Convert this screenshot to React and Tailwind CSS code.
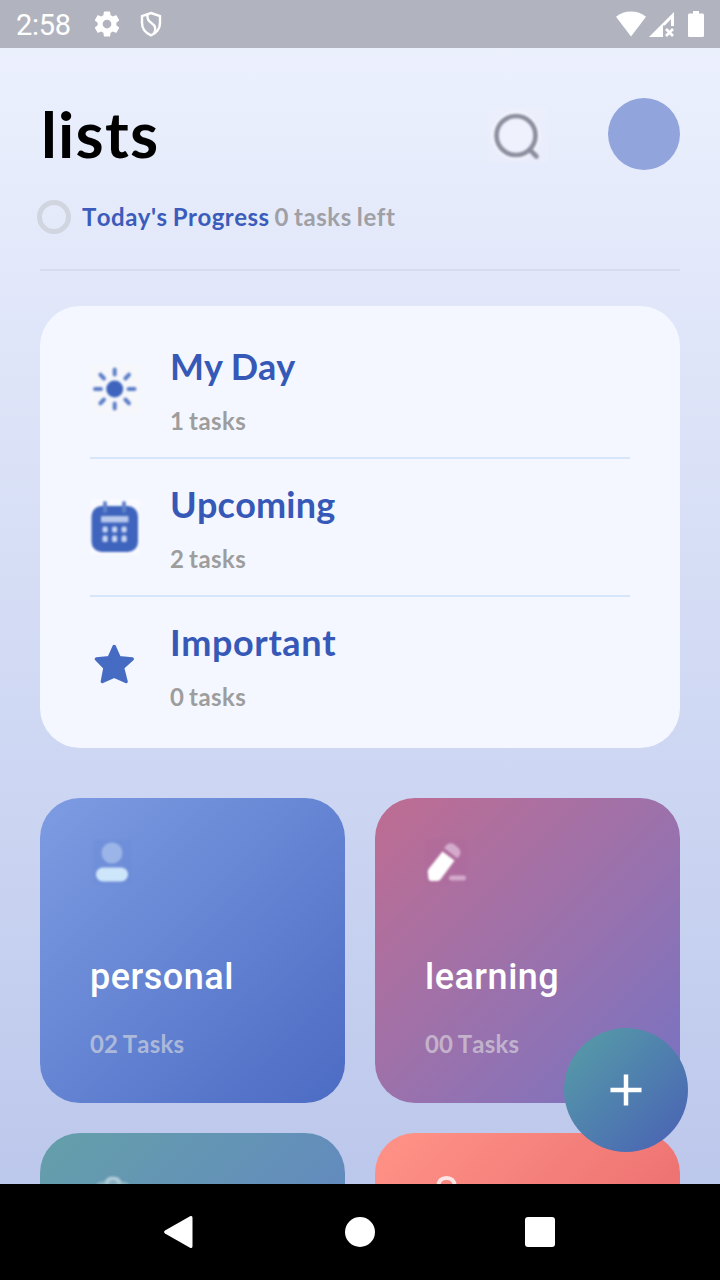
import React from "react";

function StatusBar() {
  return (
    <header className="flex h-12 shrink-0 items-center bg-[#b1b4be] pr-4 pl-4 text-white">
      <span className="w-[55px] pt-[2px] font-['Roboto',sans-serif] text-[29px] leading-[46px] tracking-[-0.3px] whitespace-nowrap">2:58</span>
      <svg className="ml-[21px] size-[30px]" viewBox="0 0 24 24" fill="currentColor">
        <path d="M19.43 12.98c.04-.32.07-.64.07-.98s-.03-.66-.07-.98l2.11-1.65c.19-.15.24-.42.12-.64l-2-3.46c-.12-.22-.39-.3-.61-.22l-2.49 1c-.52-.4-1.08-.73-1.69-.98l-.38-2.65A.488.488 0 0 0 14 2h-4c-.25 0-.46.18-.49.42l-.38 2.65c-.61.25-1.17.59-1.69.98l-2.49-1c-.23-.09-.49 0-.61.22l-2 3.46c-.13.22-.07.49.12.64l2.11 1.65c-.04.32-.07.65-.07.98s.03.66.07.98l-2.11 1.65c-.19.15-.24.42-.12.64l2 3.46c.12.22.39.3.61.22l2.49-1c.52.4 1.08.73 1.69.98l.38 2.65c.03.24.24.42.49.42h4c.25 0 .46-.18.49-.42l.38-2.65c.61-.25 1.17-.59 1.69-.98l2.49 1c.23.09.49 0 .61-.22l2-3.46c.12-.22.07-.49-.12-.64l-2.11-1.65zM12 15.5c-1.93 0-3.5-1.57-3.5-3.5s1.57-3.5 3.5-3.5 3.5 1.57 3.5 3.5-1.57 3.5-3.5 3.5z" />
      </svg>
      <svg className="ml-[18px] h-[26px] w-[22px]" viewBox="0 0 22 26" fill="none" stroke="currentColor" strokeWidth="2.4">
        <path d="M11 2 20 5.1V12c0 5.6-3.6 9.9-9 12.3C5.600 21.900 2 17.600 2 12V5.100Z" />
        <path d="M7.600 3.500C6.500 8 9 10.500 12 12.500s4.500 5 2.200 9.700" />
      </svg>
      <svg className="ml-auto h-[26px] w-[30px]" viewBox="0 0 30 26" fill="currentColor">
        <path d="M0 5.800C8-1.300 22-1.300 30 5.800L15 25.500Z" />
      </svg>
      <svg className="ml-[3px] h-[25px] w-[25px]" viewBox="0 0 25 25" fill="currentColor">
        <path fillRule="evenodd" d="M25 0v14h-3V7.200L15.800 13.500H14V25H0Z" />
        <path d="m17 17 7 7m0-7-7 7" stroke="currentColor" strokeWidth="2.800" />
      </svg>
      <svg className="ml-[14px] h-[26px] w-4" viewBox="0 0 16 26" fill="currentColor">
        <path d="M5 0h6v2.600h3.400c.9 0 1.600.7 1.600 1.600v20.200c0 .9-.7 1.600-1.600 1.600H1.600C.7 26 0 25.300 0 24.400V4.200c0-.9.7-1.600 1.600-1.600H5Z" />
      </svg>
    </header>
  );
}

function SearchIcon() {
  return (
    <svg className="h-14 w-15 blur-[0.8px]" viewBox="0 0 60 56" fill="none">
      <rect y="1" width="60" height="55" fill="#f4f7ff" opacity=".2" />
      <circle cx="28" cy="29.500" r="22.500" stroke="#fff" strokeWidth="3" opacity=".5" />
      <circle cx="28" cy="29.500" r="19.500" fill="#f8faff" fillOpacity=".35" stroke="#8b8c9d" strokeWidth="4.600" />
      <path d="m43 45 5.500 5.500" stroke="#8b8c9d" strokeWidth="4.600" strokeLinecap="round" />
    </svg>
  );
}

function SunIcon() {
  return (
    <svg className="size-[50px] blur-[0.8px]" viewBox="0 0 50 50" fill="none">
      <rect width="50" height="50" fill="#f6f7fb" />
      <circle cx="24.700" cy="25" r="8.500" fill="#3e64bd" />
      <path d="M24.700 5.500v5M24.700 39.500v5M5 25h6M38.500 25h6M10.400 10.700l3.600 3.800M35.400 14.500l3.600-3.800M10.400 39.300l3.600-3.800M35.400 35.500l3.600 3.800" stroke="#5c7ec8" strokeWidth="4" strokeLinecap="round" />
    </svg>
  );
}

function CalendarIcon() {
  return (
    <svg className="h-[56px] w-[50px] blur-[0.8px]" viewBox="0 0 50 56">
      <rect width="50" height="56" fill="#f9faff" />
      <rect x="1.500" y="7" width="46.500" height="46" rx="10" fill="#3e64bd" />
      <path d="M15 4v8M34 4v8" stroke="#6283ca" strokeWidth="4" strokeLinecap="round" />
      <rect x="11" y="17" width="27.500" height="6.500" rx="1" fill="#b9c8ed" />
      <g fill="#c8d4f2">
        <rect x="12.500" y="27.500" width="5.200" height="6" rx="1.500" /><rect x="22" y="27.500" width="5.200" height="6" rx="1.500" /><rect x="31.500" y="27.500" width="5.200" height="6" rx="1.500" />
        <rect x="12.500" y="36.500" width="5.200" height="6.500" rx="1.500" /><rect x="22" y="36.500" width="5.200" height="6.500" rx="1.500" /><rect x="31.500" y="36.500" width="5.200" height="6.500" rx="1.500" />
      </g>
    </svg>
  );
}

function StarIcon() {
  return (
    <svg className="size-[50px] blur-[0.7px]" viewBox="0 0 50 50">
      <path d="m24.200 6.500 5 11.200 13 1.300-9.700 8.800 3.500 13.700-11.800-5.300-11.800 5.300 2.600-13.700L6.500 19l12.700-1.300Z" fill="#466bc2" stroke="#466bc2" strokeWidth="3.500" strokeLinejoin="round" />
    </svg>
  );
}

function PersonIcon() {
  return (
    <svg className="h-11 w-[44px] blur-[0.8px]" viewBox="0 0 44 44">
      <rect x="3" width="38" height="44" fill="#5f7dd0" opacity=".15" />
      <circle cx="22" cy="13" r="10.500" fill="#9bb5e8" />
      <rect x="6" y="27.500" width="32" height="14" rx="7" fill="#cee6fa" />
    </svg>
  );
}

function PencilIcon() {
  return (
    <svg className="h-11 w-[44px] blur-[0.8px]" viewBox="0 0 44 44">
      <rect x="1" width="41" height="43" fill="#a75f99" opacity=".15" />
      <path d="M21 5.500q4-4 8.500-.8l4 3.200q3.500 4 .8 8l-2 2.300L19 8Z" fill="#d4aacb" />
      <path d="M17.500 11.500 29.500 20.500 15.500 39.500q-1.500 1.500-4 1.500H6q-2.200 0-2.500-2.500l-.7-6q-.2-2 1.200-4Z" fill="#fff" />
      <rect x="24" y="35.500" width="17" height="5" rx="2.500" fill="#d4aacb" />
    </svg>
  );
}

function BriefcaseIcon() {
  return (
    <svg className="h-11 w-[44px] blur-[0.8px]" viewBox="0 0 44 44" fill="none">
      <rect x="5" y="6.500" width="35" height="34" rx="7" fill="#8db5c3" />
      <path d="M16.500 9.500c0-4 2-6 6.500-6s6.500 2 6.500 6" stroke="#b0cbd7" strokeWidth="4" />
    </svg>
  );
}

function BagIcon() {
  return (
    <svg className="h-11 w-[44px] blur-[0.7px]" viewBox="0 0 44 44" fill="none">
      <path d="M13.500 15v-4.500c0-4.500 3-7.500 8-7.500s8 3 8 7.500V15" stroke="#ffe6e6" strokeWidth="4" />
      <rect x="4" y="13" width="36" height="28" rx="8" fill="#fff" />
    </svg>
  );
}

function SmartList({ icon, name, count, last, nameStyle }) {
  return (
    <li className={"flex items-center " + (last ? "h-[136px]" : "h-[138px] border-b-2 border-[#d5e6fa]")}>
      <div className="flex w-20 shrink-0 items-center">{icon}</div>
      <div className="mt-[2px] flex flex-col gap-[18px]">
        <h2 className={"text-[36px] leading-[43px] font-bold text-[#3659b8] " + nameStyle}>{name}</h2>
        <p className="text-[24px] leading-[29px] font-bold tracking-[0.4px] text-[#9d9d9d] [word-spacing:-1.5px]">{count}</p>
      </div>
    </li>
  );
}

function ListCard({ icon, name, count, colors }) {
  return (
    <article className={"flex h-[305px] flex-col rounded-[40px] px-[50px] pt-[42px] bg-linear-to-br " + colors}>
      <div className="h-11">{icon}</div>
      {name && <h3 className="mt-[72px] font-['Roboto',sans-serif] text-[36px] leading-[42px] font-medium tracking-[0.5px] text-white">{name}</h3>}
      {count && <p className="mt-[31px] text-[24px] leading-[29px] font-bold text-[#e0e0e0]/60 [word-spacing:-1.5px]">{count}</p>}
    </article>
  );
}

export default function App() {
  return (
    <div className="relative flex h-[1280px] w-[720px] flex-col overflow-hidden bg-linear-to-b from-[#eef2fe] to-[#b8c4ea] font-['Lato',sans-serif] tracking-[0.2px] [font-kerning:none]">
      <StatusBar />
      <main className="min-h-0 flex-1 overflow-hidden px-10 pt-[50px]">
        <div className="flex h-[72px] items-center">
          <h1 className="-mt-[2px] ml-px text-[64px] leading-[77px] font-bold tracking-[1.2px] text-black">lists</h1>
          <button className="mr-[60px] ml-auto" aria-label="Search"><SearchIcon /></button>
          <div className="size-[72px] rounded-full bg-[#92a4dc]" />
        </div>
        <div className="-ml-[3px] mt-[30px] flex h-[34px] items-center text-[24px] leading-[29px] font-bold">
          <span className="size-[34px] rounded-full border-[5px] border-[#d1d5df]" />
          <p className="mb-[2px] ml-[11px] flex">
            <span className="tracking-[0.45px] text-[#3b5cbb] [word-spacing:-1px]">Today's Progress</span>
            <span className="ml-[5px] tracking-[0.6px] text-[#9fa0a5] [word-spacing:-1.5px]">0 tasks left</span>
          </p>
        </div>
        <hr className="mt-[35px] border-t-2 border-[#d6dcee]" />
        <ul className="mt-[35px] h-[442px] rounded-[40px] bg-[#f4f7ff] px-[50px] pt-[15px]">
          <SmartList icon={<SunIcon />} name="My Day" count="1 tasks" nameStyle="[font-kerning:normal] tracking-[0.4px] [word-spacing:-1px]" />
          <SmartList icon={<CalendarIcon />} name="Upcoming" count="2 tasks" nameStyle="tracking-[0.2px]" />
          <SmartList icon={<StarIcon />} name="Important" count="0 tasks" nameStyle="tracking-[0.6px]" last />
        </ul>
        <section className="mt-[50px] grid grid-cols-2 gap-[30px]">
          <ListCard icon={<PersonIcon />} name="personal" count="02 Tasks" colors="from-[#7e9ce2] to-[#4c6bc3]" />
          <ListCard icon={<PencilIcon />} name="learning" count="00 Tasks" colors="from-[#bf6c91] to-[#7672c3]" />
          <ListCard icon={<BriefcaseIcon />} colors="from-[#659fa9] to-[#627bcb]" />
          <ListCard icon={<BagIcon />} colors="from-[#ff9388] to-[#e05a62]" />
        </section>
      </main>
      <button aria-label="Add list" className="absolute right-8 bottom-32 flex size-[124px] items-center justify-center rounded-full bg-linear-to-br from-[#579ea5] to-[#4a5fb4]">
        <svg className="size-8" viewBox="0 0 32 32" stroke="#fff" strokeWidth="4.500"><path d="M16 .5v31M.5 16h31" /></svg>
      </button>
      <nav className="flex h-24 shrink-0 items-center justify-center bg-black">
        <div className="flex w-[180px] justify-center">
          <svg className="mr-1 h-8 w-[29px]" viewBox="0 0 29 32" fill="#fff"><path d="M26 .3Q28.500-.8 28.500 2v28q0 2.800-2.500 1.700L1 17.400Q-.8 16 1 14.600Z" /></svg>
        </div>
        <div className="flex w-[180px] justify-center"><span className="size-[30px] rounded-full bg-white" /></div>
        <div className="flex w-[180px] justify-center"><span className="size-[30px] rounded-[3px] bg-white" /></div>
      </nav>
    </div>
  );
}
